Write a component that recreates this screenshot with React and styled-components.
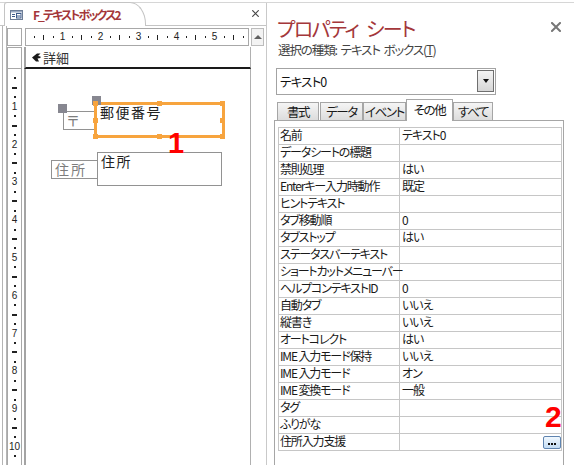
import React from "react";
import styled, { createGlobalStyle } from "styled-components";

const JP = `"Noto Sans CJK JP", "Noto Sans", sans-serif`;
const LAT = `"Liberation Sans", Arial, sans-serif`;

const GlobalStyle = createGlobalStyle`
  html, body { margin: 0; padding: 0; background: #fff; }
  body { font-family: ${JP}; font-feature-settings: "palt"; }
  *, *::before, *::after { box-sizing: border-box; }
`;

/* ---------- frame ---------- */
const Frame = styled.div`
  width: 574px;
  height: 465px;
  padding-top: 2px;
  overflow: hidden;
  background: #fff;
`;
const Inner = styled.div`
  height: 463px;
  border-top: 1px solid #d6d6d6;
  display: flex;
`;

/* ---------- left document ---------- */
const LeftPane = styled.div`
  width: 267px;
  flex: none;
  display: flex;
  flex-direction: column;
  border-right: 1px solid #c9c9c9;
`;
const DocTabBar = styled.div`
  margin-top: -1px;
  height: 24px;
  flex: none;
  display: flex;
  align-items: flex-end;
  padding-left: 4px;
  border-bottom: 1px solid #c4c4c4;
`;
const DocTab = styled.div`
  position: relative;
  width: 142px;
  height: 24px;
  margin-bottom: -1px;
  border: 1px solid #c4c4c4;
  border-bottom: none;
  border-radius: 3px 16px 0 0 / 3px 22px 0 0;
  background: #fff;
  display: flex;
  align-items: center;
  gap: 10px;
  padding-left: 5px;
`;
const DocTabTitle = styled.span`
  font-family: ${JP};
  font-feature-settings: "palt";
  font-size: 12px;
  font-weight: 700;
  letter-spacing: -1.9px;
  color: #a4373a;
  white-space: nowrap;
  line-height: 16px;
`;
const DocClose = styled.span`
  margin-left: auto;
  margin-right: 7px;
  align-self: center;
  display: flex;
`;
const DocBody = styled.div`
  flex: 1;
  min-height: 0;
  display: flex;
  margin-left: 2px;
  border-left: 1px solid #b4b4b4;
  padding-left: 3px;
`;
const DocGrid = styled.div`
  flex: 1;
  min-height: 0;
  border-left: 1px solid #b4b4b4;
  padding-top: 2px;
  display: grid;
  grid-template-columns: 15px 2px 227px 15px;
  grid-template-rows: 18px 1px 22px minmax(0, 1fr);
`;
const RulerCorner = styled.div`
  grid-column: 1;
  grid-row: 1;
  border: 1px solid #a8a8a8;
`;
const HRuler = styled.div`
  grid-column: 3;
  grid-row: 1;
  position: relative;
  margin: 0 2px 0 1px;
  border: 1px solid #a8a8a8;
  overflow: hidden;
`;
/* ruler marks sit on a measured scale: their position is the content */
const HMark = styled.div`
  position: absolute;
  top: 0;
  bottom: 0;
  left: ${(p) => p.$c - 5}px;
  width: 10px;
  display: flex;
  align-items: center;
  justify-content: center;
`;
const HTick = styled.span`
  width: 1px;
  height: ${(p) => (p.$long ? 5 : 2)}px;
  background: #222;
`;
const RulerNum = styled.span`
  font-family: ${LAT};
  font-size: 10px;
  line-height: 10px;
  color: #222;
`;
const ScrollUp = styled.div`
  grid-column: 4;
  grid-row: 1;
  width: 13px;
  border: 1px solid #bcbcbc;
  background: #f3f3f3;
  display: flex;
  align-items: center;
  justify-content: center;
  &::after {
    content: "";
    border-left: 4px solid transparent;
    border-right: 4px solid transparent;
    border-bottom: 4px solid #606060;
  }
`;
const VRulerHead = styled.div`
  grid-column: 1;
  grid-row: 3;
  border: 1px solid #a8a8a8;
`;
const SectionBar = styled.div`
  grid-column: 3;
  grid-row: 3;
  border-left: 2px solid #a4a4a4;
  border-right: 1px solid #b0b0b0;
  border-bottom: 2px solid #1a1a1a;
  display: flex;
  align-items: center;
  gap: 2px;
  padding-left: 6px;
  font-family: ${JP};
  font-size: 13px;
  color: #333;
`;
const VRuler = styled.div`
  grid-column: 1;
  grid-row: 4;
  position: relative;
  border-left: 1px solid #a8a8a8;
  border-right: 1px solid #a8a8a8;
  overflow: hidden;
`;
const VMark = styled.div`
  position: absolute;
  left: 0;
  right: 0;
  top: ${(p) => p.$c - 5}px;
  height: 10px;
  display: flex;
  align-items: center;
  justify-content: center;
`;
const VTick = styled.span`
  height: 2px;
  width: ${(p) => (p.$long ? 5 : 2)}px;
  background: #222;
`;
const Surface = styled.div`
  grid-column: 3;
  grid-row: 4;
  position: relative;
  border-left: 2px solid #a4a4a4;
  border-right: 1px solid #b0b0b0;
  overflow: hidden;
  background: #fff;
`;

/* design-surface controls: placed on the canvas (origin page x=26, y=69) */
const OX = 26;
const OY = 69;
const Control = styled.div`
  position: absolute;
  left: ${(p) => p.$x - OX}px;
  top: ${(p) => p.$y - OY}px;
  width: ${(p) => p.$w}px;
  height: ${(p) => p.$h}px;
  border: ${(p) => (p.$selected ? "3px solid #f7a43e" : "1px solid #929292")};
  background: #fff;
  z-index: ${(p) => (p.$label ? 1 : 2)};
  padding-left: 3px;
  font-family: ${JP};
  font-size: 14px;
  letter-spacing: ${(p) => (p.$label ? 2 : 1.5)}px;
  line-height: ${(p) => (p.$selected ? 15 : 17)}px;
  color: ${(p) => (p.$label ? "#7d7d7d" : "#222")};
  white-space: nowrap;
`;
const Handle = styled.span`
  position: absolute;
  left: ${(p) => p.$x - OX - p.$s / 2}px;
  top: ${(p) => p.$y - OY - p.$s / 2}px;
  width: ${(p) => p.$s}px;
  height: ${(p) => p.$s}px;
  background: ${(p) => (p.$grey ? "#878790" : "#f7a43e")};
  z-index: 3;
`;
const Marker = styled.span`
  position: absolute;
  left: ${(p) => p.$x}px;
  top: ${(p) => p.$y}px;
  font-family: ${LAT};
  font-weight: 700;
  font-size: ${(p) => p.$size}px;
  line-height: 1;
  color: #ff0000;
  z-index: 5;
`;

/* ---------- right property sheet ---------- */
const RightPane = styled.div`
  flex: 1;
  min-width: 0;
  display: flex;
  flex-direction: column;
  padding: 14px 10px 0 9px;
  font-family: ${JP};
  font-feature-settings: "palt";
`;
const TitleRow = styled.div`
  display: flex;
  justify-content: space-between;
  align-items: flex-start;
  padding-right: 3px;
`;
const Title = styled.h1`
  margin: 0 0 2px;
  padding: 1px 0 0 1px;
  font-size: 20px;
  font-weight: 400;
  letter-spacing: -1.6px;
  word-spacing: 5px;
  line-height: 22px;
  color: #a4373a;
  white-space: nowrap;
`;
const CloseBtn = styled.span`
  margin-top: 5px;
  display: flex;
`;
const Subtitle = styled.div`
  padding-left: 2px;
  font-size: 12.5px;
  letter-spacing: -1.1px;
  word-spacing: 2px;
  line-height: 16px;
  color: #444;
  white-space: nowrap;
`;
const Combo = styled.div`
  margin-top: 10px;
  width: 220px;
  height: 27px;
  border: 1px solid #a3a3a3;
  display: flex;
  align-items: center;
  justify-content: space-between;
  padding: 0 1px 1px 3px;
  font-size: 12.5px;
  letter-spacing: -0.8px;
  color: #111;
`;
const DropBtn = styled.span`
  width: 17px;
  height: 22px;
  border: 1px solid #6f6f6f;
  background: linear-gradient(#f4f4f4, #d6d6d6);
  display: flex;
  align-items: center;
  justify-content: center;
  &::after {
    content: "";
    border-left: 3.5px solid transparent;
    border-right: 3.5px solid transparent;
    border-top: 4px solid #111;
  }
`;
const TabRow = styled.div`
  margin-top: 4px;
  height: 22px;
  padding-left: 1px;
  display: flex;
  align-items: flex-end;
  position: relative;
  z-index: 1;
  margin-bottom: -1px;
`;
const Tab = styled.div`
  flex: none;
  width: ${(p) => p.$w}px;
  margin-right: ${(p) => p.$mr || 0}px;
  height: ${(p) => (p.$active ? 22 : 18)}px;
  margin-bottom: ${(p) => (p.$active ? 0 : 1)}px;
  border: 1px solid #a6a6a6;
  border-bottom: none;
  background: ${(p) => (p.$active ? "#fff" : "linear-gradient(#f5f5f5, #dcdcdc)")};
  display: flex;
  align-items: center;
  justify-content: center;
  font-size: 12.5px;
  letter-spacing: -1.4px;
  color: #1a1a1a;
  white-space: nowrap;
  padding-bottom: ${(p) => (p.$active ? 2 : 0)}px;
`;
const Panel = styled.div`
  position: relative;
  flex: 1;
  margin-left: -2px;
  width: 290px;
  border: 1px solid #a6a6a6;
  border-bottom: none;
  padding: 6px 2px 0 3px;
`;
const PropTable = styled.div`
  display: grid;
  grid-template-columns: 121px 162px;
  border-top: 1px solid #c6c6c6;
  border-left: 1px solid #c6c6c6;
  width: 284px;
`;
const Cell = styled.div`
  height: 17px;
  border-right: 1px solid #c6c6c6;
  border-bottom: 1px solid #c6c6c6;
  padding-left: ${(p) => (p.$value ? 2 : 1)}px;
  font-size: 12px;
  letter-spacing: ${(p) => (p.$value ? -1 : -1.15)}px;
  line-height: 13px;
  color: #1a1a1a;
  white-space: nowrap;
  display: flex;
  align-items: flex-start;
  justify-content: ${(p) => (p.$button ? "flex-end" : "flex-start")};
`;
const EllipsisBtn = styled.span`
  margin-top: 2px;
  width: 18px;
  height: 13px;
  border: 1px solid #5f84b0;
  border-radius: 2px;
  background: linear-gradient(#f1f8fe, #c2dcf4);
  display: flex;
  align-items: center;
  justify-content: center;
  gap: 1px;
`;
const Dot = styled.span`
  width: 2px;
  height: 2px;
  background: #111;
  margin-top: 3px;
`;

/* ---------- icons ---------- */
const FormIcon = () => (
  <svg width="13" height="10" viewBox="0 0 13 10">
    <rect x="0.5" y="0.5" width="12" height="9" fill="#fff" stroke="#6d7d96" />
    <rect x="1" y="1" width="11" height="1.5" fill="#9aa9c2" />
    <rect x="2" y="4" width="3" height="1" fill="#3d5a8a" />
    <rect x="2" y="6" width="3" height="1" fill="#3d5a8a" />
    <rect x="6.5" y="3.5" width="4.5" height="4.5" fill="none" stroke="#3d5a8a" />
    <rect x="7" y="5.5" width="3.5" height="1" fill="#3d5a8a" />
  </svg>
);
const XIcon = ({ size, color, w }) => (
  <svg width={size} height={size} viewBox="0 0 10 10">
    <path d="M1 1 L9 9 M9 1 L1 9" stroke={color} strokeWidth={w} strokeLinecap="square" />
  </svg>
);
const SectionIcon = () => (
  <svg width="9" height="9" viewBox="0 0 9 9">
    <path d="M0 4.5 L5 0.5 L8.5 0.5 L6 3 L8.5 3.5 L8.5 5 L5.5 5.5 L7 8.5 L4 8.5 Z" fill="#1a1a1a" />
  </svg>
);

/* ---------- data ---------- */
const props = [
  ["名前", "テキスト0"],
  ["データシートの標題", ""],
  ["禁則処理", "はい"],
  ["Enterキー入力時動作", "既定"],
  ["ヒントテキスト", ""],
  ["タブ移動順", "0"],
  ["タブストップ", "はい"],
  ["ステータスバーテキスト", ""],
  ["ショートカットメニューバー", ""],
  ["ヘルプコンテキストID", "0"],
  ["自動タブ", "いいえ"],
  ["縦書き", "いいえ"],
  ["オートコレクト", "はい"],
  ["IME 入力モード保持", "いいえ"],
  ["IME 入力モード", "オン"],
  ["IME 変換モード", "一般"],
  ["タグ", ""],
  ["ふりがな", ""],
  ["住所入力支援", null],
];

const tabs = [
  { label: "書式", w: 42, mr: 1 },
  { label: "データ", w: 43 },
  { label: "イベント", w: 43 },
  { label: "その他", w: 47, active: true },
  { label: "すべて", w: 40 },
];

/* horizontal scale: 0 at page x 24.5, ruler content starts at x 26 */
const hMarks = Array.from({ length: 23 }, (_, i) => i + 1);
/* vertical scale: 0 at page y 68.9, ruler content starts at y 69 */
const vMarks = Array.from({ length: 42 }, (_, i) => i + 1);

const zipHandles = [
  [95.5, 103.5], [159, 103.5], [222.5, 103.5],
  [95.5, 120], [222.5, 120],
  [95.5, 136.5], [159, 136.5], [222.5, 136.5],
];

export default function App() {
  return (
    <>
      <GlobalStyle />
      <Frame>
        <Inner>
          <LeftPane>
            <DocTabBar>
              <DocTab>
                <FormIcon />
                <DocTabTitle>F_テキストボックス2</DocTabTitle>
              </DocTab>
              <DocClose>
                <XIcon size={7} color="#444" w={1.6} />
              </DocClose>
            </DocTabBar>
            <DocBody>
              <DocGrid>
                <RulerCorner />
                <HRuler>
                  {hMarks.map((k) => (
                    <HMark key={k} $c={9.5 * k - 1.5}>
                      {k % 4 === 0 ? (
                        <RulerNum>{k / 4}</RulerNum>
                      ) : (
                        <HTick $long={k % 2 === 0} />
                      )}
                    </HMark>
                  ))}
                </HRuler>
                <ScrollUp />
                <VRulerHead />
                <SectionBar>
                  <SectionIcon />
                  <span>詳細</span>
                </SectionBar>
                <VRuler>
                  {vMarks.map((k) => (
                    <VMark key={k} $c={9.45 * k - 0.1}>
                      {k % 4 === 0 ? (
                        <RulerNum>{k / 4}</RulerNum>
                      ) : (
                        <VTick $long={k % 2 === 0} />
                      )}
                    </VMark>
                  ))}
                </VRuler>
                <Surface>
                  <Control $label $x={63} $y={111} $w={35} $h={19}>〒</Control>
                  <Handle $grey $s={9} $x={62.5} $y={108.5} />
                  <Control $selected $x={94} $y={102} $w={131} $h={36}>郵便番号</Control>
                  <Handle $grey $s={9} $x={96.5} $y={100.5} />
                  {zipHandles.map(([x, y], i) => (
                    <Handle key={i} $s={5} $x={x} $y={y} />
                  ))}
                  <Control $label $x={51} $y={160} $w={47} $h={19}>住所</Control>
                  <Control $x={97} $y={152} $w={125} $h={34}>住所</Control>
                  <Marker $size={29} $x={168 - OX} $y={129 - OY}>1</Marker>
                </Surface>
              </DocGrid>
            </DocBody>
          </LeftPane>

          <RightPane>
            <TitleRow>
              <Title>プロパティ シート</Title>
              <CloseBtn>
                <XIcon size={10} color="#777" w={2} />
              </CloseBtn>
            </TitleRow>
            <Subtitle>
              選択の種類: テキスト ボックス(<u>T</u>)
            </Subtitle>
            <Combo>
              <span>テキスト0</span>
              <DropBtn />
            </Combo>
            <TabRow>
              {tabs.map((t) => (
                <Tab key={t.label} $w={t.w} $mr={t.mr} $active={t.active}>
                  {t.label}
                </Tab>
              ))}
            </TabRow>
            <Panel>
              <PropTable>
                {props.map(([k, v]) => (
                  <React.Fragment key={k}>
                    <Cell>{k}</Cell>
                    {v === null ? (
                      <Cell $value $button>
                        <EllipsisBtn>
                          <Dot />
                          <Dot />
                          <Dot />
                        </EllipsisBtn>
                      </Cell>
                    ) : (
                      <Cell $value>{v}</Cell>
                    )}
                  </React.Fragment>
                ))}
              </PropTable>
              <Marker $size={30} $x={270} $y={281}>2</Marker>
            </Panel>
          </RightPane>
        </Inner>
      </Frame>
    </>
  );
}
